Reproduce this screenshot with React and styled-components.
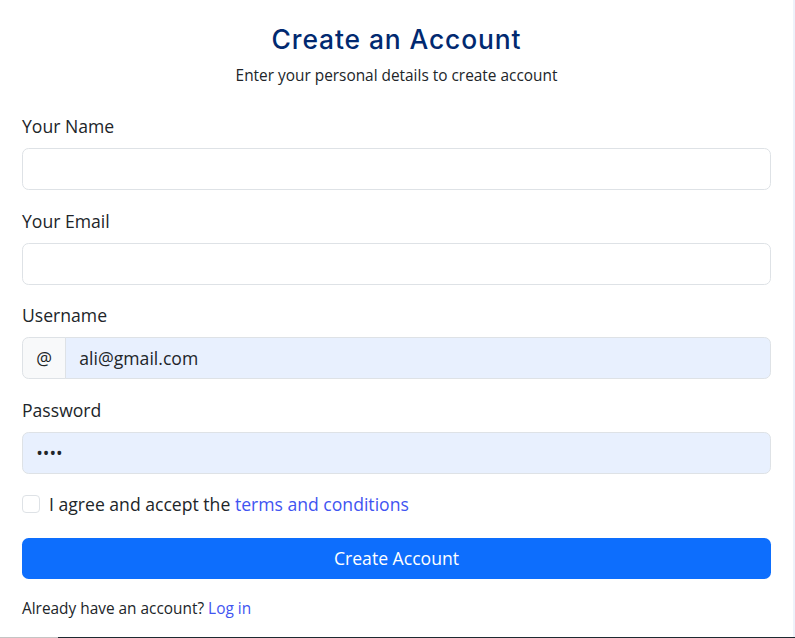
import styled, { createGlobalStyle } from "styled-components";

const GlobalStyle = createGlobalStyle`
    html {
        font-size: 17.6px;
    }
    body {
        margin: 0;
        background-color: #eef2fa;
        font-family: "Open Sans", "Liberation Sans", sans-serif;
        color: #212529;
        line-height: 1.5;
    }
    * {
        box-sizing: border-box;
    }
`

const Page = styled.div`
    display: flex;
    flex-direction: column;
    height: 638px;
`

const Card = styled.div`
    flex: 1;
    width: 793px;
    background-color: #fff;
    padding: 24px 1.25rem 0 1.25rem;
    display: flex;
    flex-direction: column;
`

const Title = styled.h5`
    margin: 0 0 0.5rem 0;
    text-align: center;
    font-family: "Inter", "Noto Sans", sans-serif;
    font-weight: 500;
    font-size: 1.5rem;
    line-height: 1.2;
    color: #012970;
    letter-spacing: 0.9px;
`

const Subtitle = styled.p`
    margin: 0 0 0.45rem 0;
    text-align: center;
    font-size: 0.875rem;
    line-height: 1.5;
`

const Form = styled.form`
    display: flex;
    flex-direction: column;
    gap: 1rem;
    padding-top: 1rem;
`

const Field = styled.div`
    display: flex;
    flex-direction: column;
`

const Label = styled.label`
    margin-bottom: 0.5rem;
    font-size: 1rem;
    line-height: 1.5;
`

const Input = styled.input`
    width: 100%;
    height: 41.8px;
    padding: 0.375rem 0.75rem;
    font-family: inherit;
    font-size: 1rem;
    color: #212529;
    background-color: ${p => (p.$filled ? "#e8f0fe" : "#fff")};
    border: 1px solid #dee2e6;
    border-radius: 0.375rem;
    outline: none;
`

const Group = styled.div`
    display: flex;

    ${Input} {
        flex: 1;
        border-top-left-radius: 0;
        border-bottom-left-radius: 0;
        margin-left: -1px;
    }
`

const Addon = styled.span`
    display: flex;
    align-items: center;
    padding: 0.375rem 0.75rem;
    font-size: 1rem;
    background-color: #f8f9fa;
    border: 1px solid #dee2e6;
    border-radius: 0.375rem 0 0 0.375rem;
`

const Check = styled.div`
    display: flex;
    align-items: flex-start;
    gap: 9px;
    min-height: 1.5rem;
    margin-bottom: 0.125rem;
    font-size: 1rem;

    input {
        appearance: none;
        width: 18px;
        height: 18px;
        margin: 4px 0 0 0;
        border: 1px solid #dee2e6;
        border-radius: 4px;
        background-color: #fff;
        flex-shrink: 0;
    }
`

const Link = styled.a`
    color: #4154f1;
    text-decoration: none;
`

const Button = styled.button`
    width: 100%;
    height: 41.8px;
    border: none;
    border-radius: 0.375rem;
    background-color: #0d6efd;
    color: #fff;
    font-family: inherit;
    font-size: 1rem;
    cursor: pointer;
`

const Footer = styled.p`
    margin: 0;
    font-size: 0.875rem;
`

const BottomLine = styled.div`
    display: flex;
    height: 1px;

    span:first-child {
        width: 58px;
        background-color: #c4c4c4;
    }
    span:last-child {
        flex: 1;
        background-color: #1e2a31;
    }
`

export default function App() {
    return (
        <>
            <GlobalStyle />
            <Page>
                <Card>
                    <Title>Create an Account</Title>
                    <Subtitle>Enter your personal details to create account</Subtitle>
                    <Form onSubmit={e => e.preventDefault()}>
                        <Field>
                            <Label>Your Name</Label>
                            <Input type="text" />
                        </Field>
                        <Field>
                            <Label>Your Email</Label>
                            <Input type="email" />
                        </Field>
                        <Field>
                            <Label>Username</Label>
                            <Group>
                                <Addon>@</Addon>
                                <Input type="text" $filled defaultValue="ali@gmail.com" />
                            </Group>
                        </Field>
                        <Field>
                            <Label>Password</Label>
                            <Input type="password" $filled defaultValue="1234" />
                        </Field>
                        <Check>
                            <input type="checkbox" />
                            <span>I agree and accept the <Link href="#">terms and conditions</Link></span>
                        </Check>
                        <Button type="submit">Create Account</Button>
                        <Footer>Already have an account? <Link href="#">Log in</Link></Footer>
                    </Form>
                </Card>
                <BottomLine><span /><span /></BottomLine>
            </Page>
        </>
    )
}
